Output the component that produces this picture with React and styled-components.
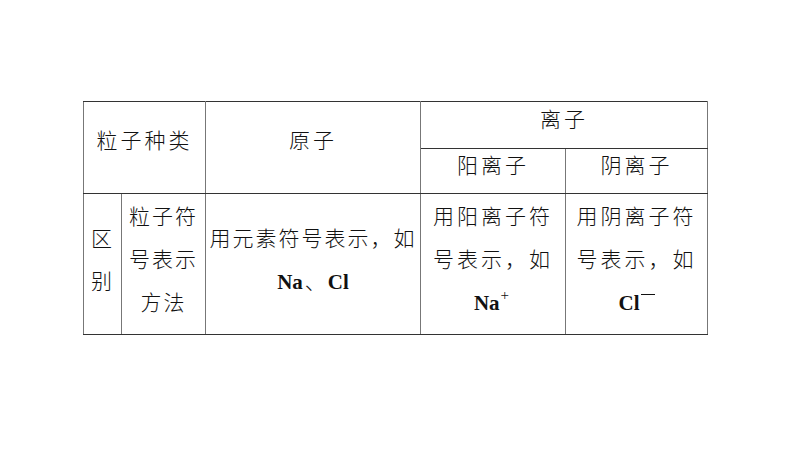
import React from "react";
import styled, { createGlobalStyle } from "styled-components";

const GlobalStyle = createGlobalStyle`
  html, body {
    margin: 0;
    padding: 0;
    background: #ffffff;
  }
  body {
    width: 794px;
    height: 458px;
    overflow: hidden;
  }
`;

const Page = styled.div`
  padding: 101px 0 0 83px;
`;

const Table = styled.table`
  border-collapse: collapse;
  table-layout: fixed;
  width: 624px;
  font-family: "Liberation Serif", "Noto Sans CJK SC", serif;
  color: #111;
`;

const Row = styled.tr`
  height: ${(p) => p.$h}px;
`;

const Cell = styled.td`
  border-top: 1px solid #333;
  border-bottom: 1px solid #333;
  border-left: 1.5px solid #777;
  border-right: 1.5px solid #777;
  padding: 0 0 ${(p) => p.$lift || 0}px 0;
  text-align: center;
  vertical-align: middle;
  font-size: 21px;
  letter-spacing: ${(p) => (p.$tight ? 2 : 3)}px;
  line-height: ${(p) => p.$lh || 43}px;
  white-space: nowrap;
  font-family: "Noto Sans CJK SC", "Liberation Serif", sans-serif;
  font-weight: 300;
`;

const Formula = styled.span`
  font-family: "Liberation Serif", serif;
  font-weight: bold;
  font-size: 21px;
  letter-spacing: 0;
  line-height: 1;
`;

const Sep = styled.span`
  font-family: "Noto Sans CJK SC", sans-serif;
  font-weight: 300;
  letter-spacing: 0;
  line-height: 1;
  margin: 0 2px;
`;

const Sup = styled.sup`
  font-family: "Liberation Serif", serif;
  font-weight: normal;
  font-size: 15px;
  vertical-align: 10px;
  line-height: 0;
  margin-left: 1px;
`;

const Minus = styled.span`
  display: inline-block;
  width: 14px;
  height: 1.5px;
  background: #111;
  vertical-align: 15px;
  margin-left: 1px;
`;

export default function App() {
  return (
    <>
      <GlobalStyle />
      <Page>
        <Table>
          <colgroup>
            <col style={{ width: 38 }} />
            <col style={{ width: 84 }} />
            <col style={{ width: 215 }} />
            <col style={{ width: 145 }} />
            <col style={{ width: 142 }} />
          </colgroup>
          <tbody>
            <Row $h={47}>
              <Cell colSpan={2} rowSpan={2} $lh={28} $lift={18}>
                粒子种类
              </Cell>
              <Cell rowSpan={2} $lh={28} $lift={18}>
                原子
              </Cell>
              <Cell colSpan={2} $lh={28} $lift={14}>
                离子
              </Cell>
            </Row>
            <Row $h={45}>
              <Cell $lh={28} $lift={14}>
                阳离子
              </Cell>
              <Cell $lh={28} $lift={14}>
                阴离子
              </Cell>
            </Row>
            <Row $h={140}>
              <Cell $tight $lift={11}>
                区
                <br />
                别
              </Cell>
              <Cell $tight $lift={11}>
                粒子符
                <br />
                号表示
                <br />
                方法
              </Cell>
              <Cell $tight $lift={11}>
                用元素符号表示，如
                <br />
                <Formula>Na</Formula>
                <Sep>、</Sep>
                <Formula>Cl</Formula>
              </Cell>
              <Cell $lift={11}>
                用阳离子符
                <br />
                号表示，如
                <br />
                <Formula>Na</Formula>
                <Sup>+</Sup>
              </Cell>
              <Cell $lift={11}>
                用阴离子符
                <br />
                号表示，如
                <br />
                <Formula>Cl</Formula>
                <Minus />
              </Cell>
            </Row>
          </tbody>
        </Table>
      </Page>
    </>
  );
}
